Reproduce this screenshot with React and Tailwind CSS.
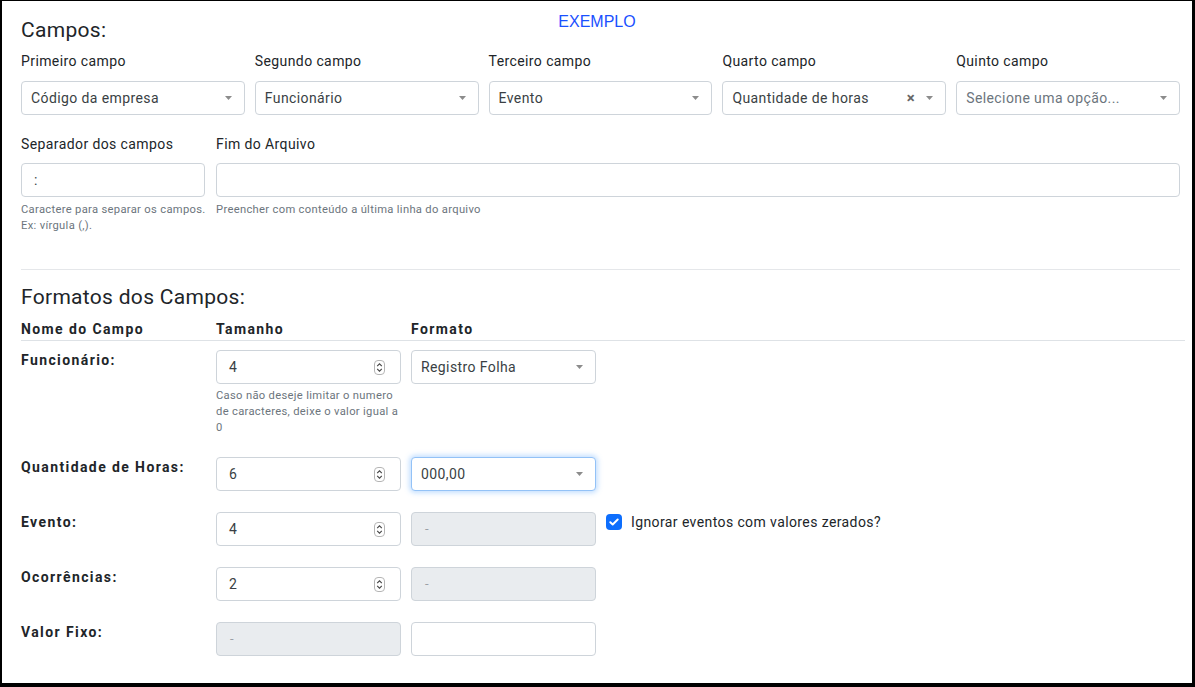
import React from "react";

const Caret = () => (
  <svg width="7" height="4" viewBox="0 0 7 4" className="shrink-0">
    <path d="M0 0h7L3.5 4z" fill="#8c8c8c" />
  </svg>
);

const Spin = () => (
  <svg width="11" height="15" viewBox="0 0 11 15" className="shrink-0">
    <rect x="0.5" y="0.5" width="10" height="14" rx="3.5" fill="none" stroke="#b5b5b5" />
    <path d="M3.2 6.2l2.3-2.3 2.3 2.3M3.2 8.8l2.3 2.3 2.3-2.3" fill="none" stroke="#444" strokeWidth="1.1" />
  </svg>
);

function Select({ value, placeholder, clear, focus }) {
  return (
    <div
      className={
        "h-[34px] rounded-[4px] border bg-white pl-[9px] pr-[12px] flex items-center justify-between text-[14px] tracking-[0.4px] " +
        (focus
          ? "border-[#93c2f7] shadow-[0_0_5px_2px_rgba(90,165,255,0.35)]"
          : "border-[#ced4da]")
      }
    >
      <span className={placeholder ? "text-[#6c757d]" : "text-[#3a3f44]"}>{value || placeholder}</span>
      <span className="flex items-center gap-[11px]">
        {clear && <span className="text-[#666] text-[15px] font-bold leading-none">×</span>}
        <Caret />
      </span>
    </div>
  );
}

function NumInput({ value }) {
  return (
    <div className="h-[34px] rounded-[4px] border border-[#ced4da] bg-white pl-[12px] pr-[15px] flex items-center justify-between text-[14px] text-[#3a3f44]">
      <span>{value}</span>
      <Spin />
    </div>
  );
}

function Disabled() {
  return (
    <div className="h-[34px] rounded-[4px] border border-[#ced4da] bg-[#e9ecef] pl-[13px] flex items-center text-[13px] text-[#9aa0a6]">
      -
    </div>
  );
}

function Empty({ className = "" }) {
  return <div className={"h-[34px] rounded-[4px] border border-[#ced4da] bg-white " + className} />;
}

const help = "text-[11.2px] leading-[16px] tracking-[0.32px] text-[#6c757d]";

function Row({ label, children, extra }) {
  return (
    <div className="grid grid-cols-[185px_185px_185px_auto] gap-x-[10px] pb-[21px]">
      <div className="text-[14px] font-bold text-[#212529] leading-[20px] tracking-[1.4px]">{label}</div>
      {children}
      {extra || <div />}
    </div>
  );
}

export default function App() {
  return (
    <div
      className="w-[1195px] h-[687px] bg-white border-t border-l-2 border-r-[3px] border-b-4 border-black pl-[19px] pr-[12px] pt-[12px] text-[#212529]"
      style={{ fontFamily: "Roboto, 'Noto Sans', sans-serif" }}
    >
      <div className="grid grid-cols-[1fr_auto_1fr] items-start pr-[7px]">
        <h5 className="mt-[3px] text-[21px] leading-[28px] font-normal tracking-[0.3px]">Campos:</h5>
        <a className="text-[16px] leading-[18px] text-[#1a50ff]" style={{ fontFamily: "'Liberation Sans', Arial, sans-serif" }}>
          EXEMPLO
        </a>
        <div />
      </div>

      <div className="grid grid-cols-5 gap-x-[10px] mt-[7px] tracking-[0.4px]">
        {[
          ["Primeiro campo", { value: "Código da empresa" }],
          ["Segundo campo", { value: "Funcionário" }],
          ["Terceiro campo", { value: "Evento" }],
          ["Quarto campo", { value: "Quantidade de horas", clear: true }],
          ["Quinto campo", { placeholder: "Selecione uma opção..." }],
        ].map(([l, p]) => (
          <div key={l}>
            <div className="text-[14px] leading-[20px] mb-[10px]">{l}</div>
            <Select {...p} />
          </div>
        ))}
      </div>

      <div className="grid grid-cols-[184px_1fr] gap-x-[11px] mt-[19px]">
        <div>
          <div className="text-[14px] leading-[20px] mb-[9px] tracking-[0.4px]">Separador dos campos</div>
          <div className="h-[34px] rounded-[4px] border border-[#ced4da] bg-white pl-[12px] flex items-center text-[14px] text-[#3a3f44]">
            :
          </div>
          <div className={help + " mt-[5px] whitespace-nowrap"}>
            Caractere para separar os campos.
            <br />
            Ex: vírgula (,).
          </div>
        </div>
        <div>
          <div className="text-[14px] leading-[20px] mb-[9px] tracking-[0.4px]">Fim do Arquivo</div>
          <Empty />
          <div className={help + " mt-[5px]"}>Preencher com conteúdo a última linha do arquivo</div>
        </div>
      </div>

      <hr className="mt-[35px] border-0 border-t border-[#e5e7ea]" />

      <h5 className="mt-[13px] text-[21px] leading-[28px] font-normal tracking-[0.3px]">Formatos dos Campos:</h5>

      <div className="-mr-[5px] mt-[8px]">
        <div className="grid grid-cols-[185px_185px_185px_auto] gap-x-[10px] border-b border-[#dee2e6] pb-[1px] text-[14px] font-bold leading-[20px] tracking-[1.4px]">
          <div>Nome do Campo</div>
          <div>Tamanho</div>
          <div>Formato</div>
          <div />
        </div>

        <div className="pt-[9px]">
          <Row label="Funcionário:">
            <div>
              <NumInput value="4" />
              <div className={help + " mt-[4px]"}>
                Caso não deseje limitar o numero de caracteres, deixe o valor igual a 0
              </div>
            </div>
            <div>
              <Select value="Registro Folha" />
            </div>
          </Row>
          <Row label="Quantidade de Horas:">
            <NumInput value="6" />
            <Select value="000,00" focus />
          </Row>
          <Row
            label="Evento:"
            extra={
              <label className="flex items-center gap-[9px] text-[14px] tracking-[0.4px] text-[#212529] h-[20px]">
                <span className="w-[16px] h-[16px] rounded-[4px] bg-[#0d6efd] flex items-center justify-center">
                  <svg width="10" height="8" viewBox="0 0 10 8">
                    <path d="M1.3 4.2l2.4 2.3L8.7 1.5" fill="none" stroke="white" strokeWidth="1.9" strokeLinecap="round" strokeLinejoin="round" />
                  </svg>
                </span>
                Ignorar eventos com valores zerados?
              </label>
            }
          >
            <NumInput value="4" />
            <Disabled />
          </Row>
          <Row label="Ocorrências:">
            <NumInput value="2" />
            <Disabled />
          </Row>
          <Row label="Valor Fixo:">
            <Disabled />
            <Empty />
          </Row>
        </div>
      </div>
    </div>
  );
}
